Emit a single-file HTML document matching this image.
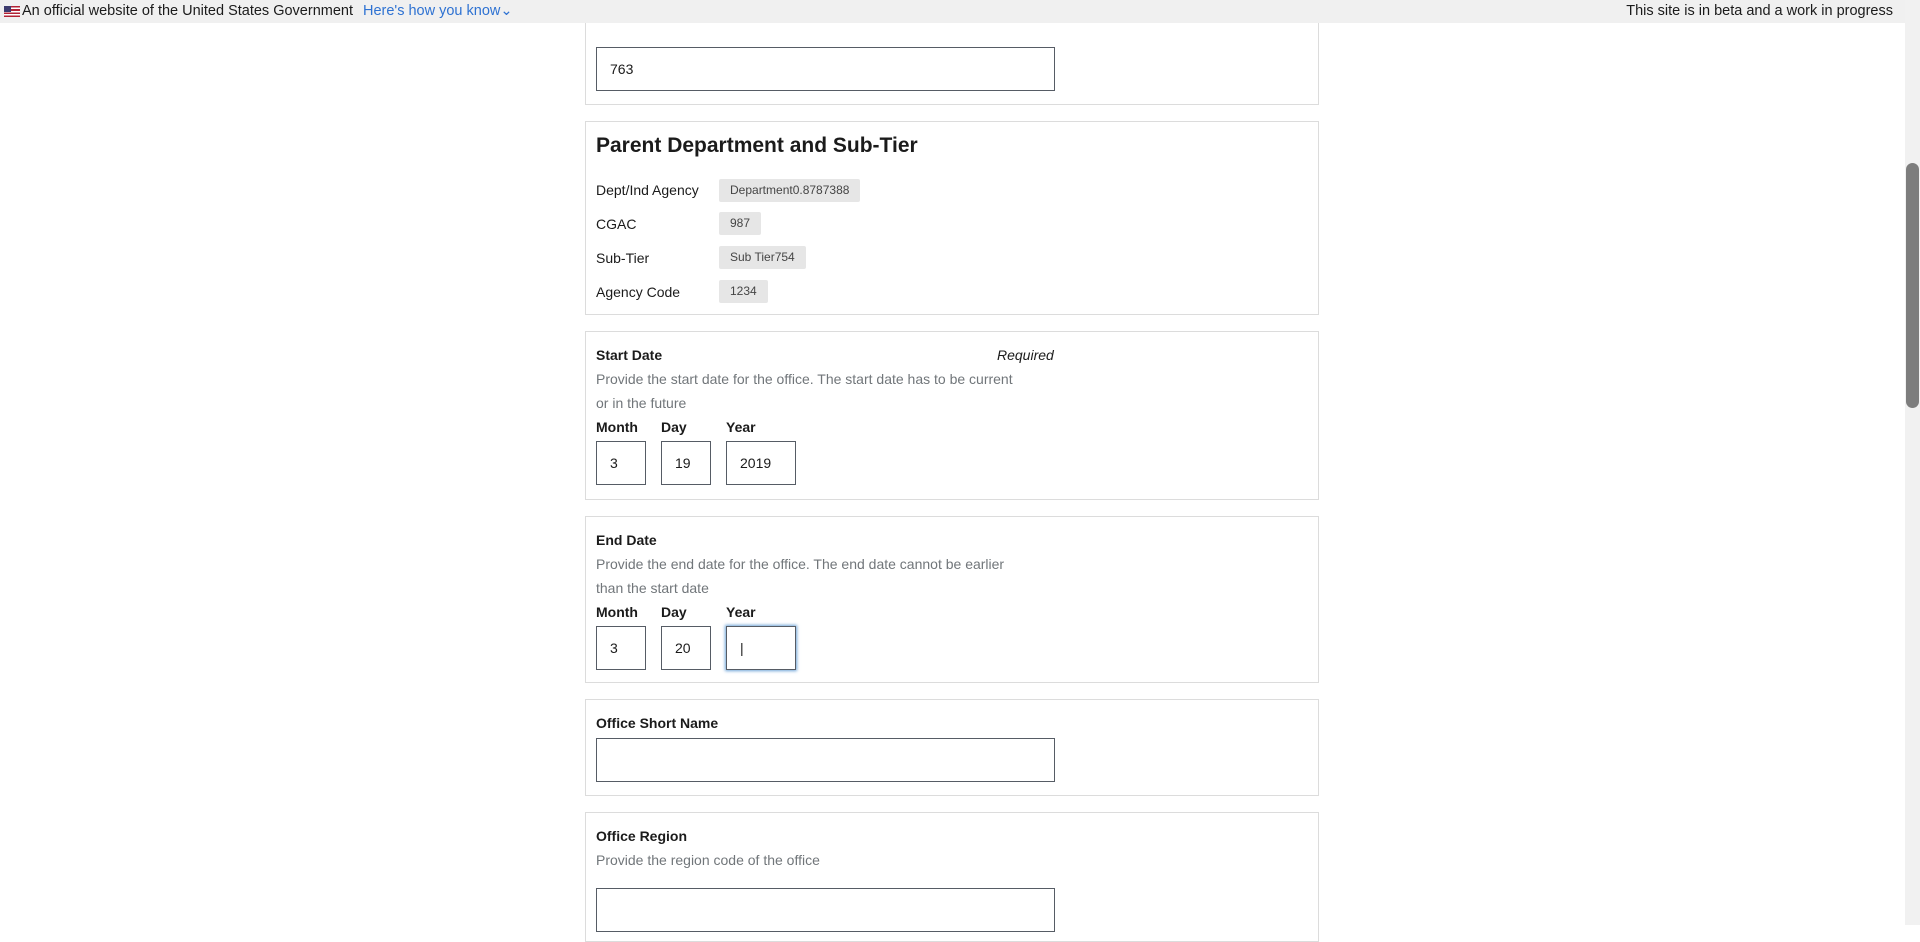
<!DOCTYPE html>
<html><head><meta charset="utf-8"><style>
*{box-sizing:border-box;margin:0;padding:0}
body{width:1920px;height:925px;overflow:hidden;background:#fff;font-family:"Liberation Sans Narrow","Liberation Sans",sans-serif;color:#1b1b1b;position:relative}
.bar{position:absolute;left:0;top:0;width:1905px;height:23px;background:#f0f0f0;font-size:14.5px;line-height:23px;z-index:5}
.bar .l{position:absolute;left:4px;top:0;display:flex;align-items:center}
.bar .r{position:absolute;right:12px;top:0}
.flag{width:16px;height:11px;margin-right:2px;background:repeating-linear-gradient(#b22234 0 1.6px,#fff 1.6px 3.2px);position:relative}
.flag:before{content:"";position:absolute;left:0;top:0;width:7px;height:6px;background:#3c3b6e}
.card{position:absolute;left:585px;width:734px;border:1px solid #dcdcdc;background:#fff}
.t{position:absolute;left:596px;font-size:14px;white-space:nowrap}
.b{font-weight:bold}
.g{color:#71767a}
.in{position:absolute;border:1px solid #565c65;height:44px;font-size:14px;line-height:42px;padding-left:13px}
.tag{position:absolute;left:719px;background:#e6e6e6;border-radius:2px;font-size:12px;color:#454545;height:23px;line-height:23px;padding:0 11px}
.sb{position:absolute;right:0;top:0;width:15px;height:925px;background:#f1f1f1}
.th{position:absolute;right:1px;top:163px;width:13px;height:245px;background:#7d7d7d;border-radius:7px}
</style></head><body>
<div class="bar"><div class="l"><div class="flag"></div>An official website of the United States Government <span style="color:#2e72d2;margin-left:10px">Here's how you know&#8964;</span></div><div class="r">This site is in beta and a work in progress</div></div>

<div class="card" style="top:-10px;height:115px"></div>
<div class="in" style="left:596px;top:47px;width:459px">763</div>

<div class="card" style="top:121px;height:194px"></div>
<div class="t b" style="top:134px;font-size:21px">Parent Department and Sub-Tier</div>
<div class="t" style="top:182px">Dept/Ind Agency</div><div class="tag" style="top:179px">Department0.8787388</div>
<div class="t" style="top:216px">CGAC</div><div class="tag" style="top:212px">987</div>
<div class="t" style="top:250px">Sub-Tier</div><div class="tag" style="top:246px">Sub Tier754</div>
<div class="t" style="top:284px">Agency Code</div><div class="tag" style="top:280px">1234</div>

<div class="card" style="top:331px;height:169px"></div>
<div class="t b" style="top:347px">Start Date</div>
<div class="t" style="top:347px;left:997px;font-style:italic">Required</div>
<div class="t g" style="top:371px">Provide the start date for the office. The start date has to be current</div>
<div class="t g" style="top:395px">or in the future</div>
<div class="t b" style="top:419px">Month</div><div class="t b" style="top:419px;left:661px">Day</div><div class="t b" style="top:419px;left:726px">Year</div>
<div class="in" style="left:596px;top:441px;width:50px">3</div>
<div class="in" style="left:661px;top:441px;width:50px">19</div>
<div class="in" style="left:726px;top:441px;width:70px">2019</div>

<div class="card" style="top:516px;height:167px"></div>
<div class="t b" style="top:532px">End Date</div>
<div class="t g" style="top:556px">Provide the end date for the office. The end date cannot be earlier</div>
<div class="t g" style="top:580px">than the start date</div>
<div class="t b" style="top:604px">Month</div><div class="t b" style="top:604px;left:661px">Day</div><div class="t b" style="top:604px;left:726px">Year</div>
<div class="in" style="left:596px;top:626px;width:50px">3</div>
<div class="in" style="left:661px;top:626px;width:50px">20</div>
<div class="in" style="left:726px;top:626px;width:70px;box-shadow:0 0 3px 1px #6ea4d8">|</div>

<div class="card" style="top:699px;height:97px"></div>
<div class="t b" style="top:715px">Office Short Name</div>
<div class="in" style="left:596px;top:738px;width:459px"></div>

<div class="card" style="top:812px;height:130px"></div>
<div class="t b" style="top:828px">Office Region</div>
<div class="t g" style="top:852px">Provide the region code of the office</div>
<div class="in" style="left:596px;top:888px;width:459px"></div>

<div class="sb"><div class="th"></div></div>
</body></html>
